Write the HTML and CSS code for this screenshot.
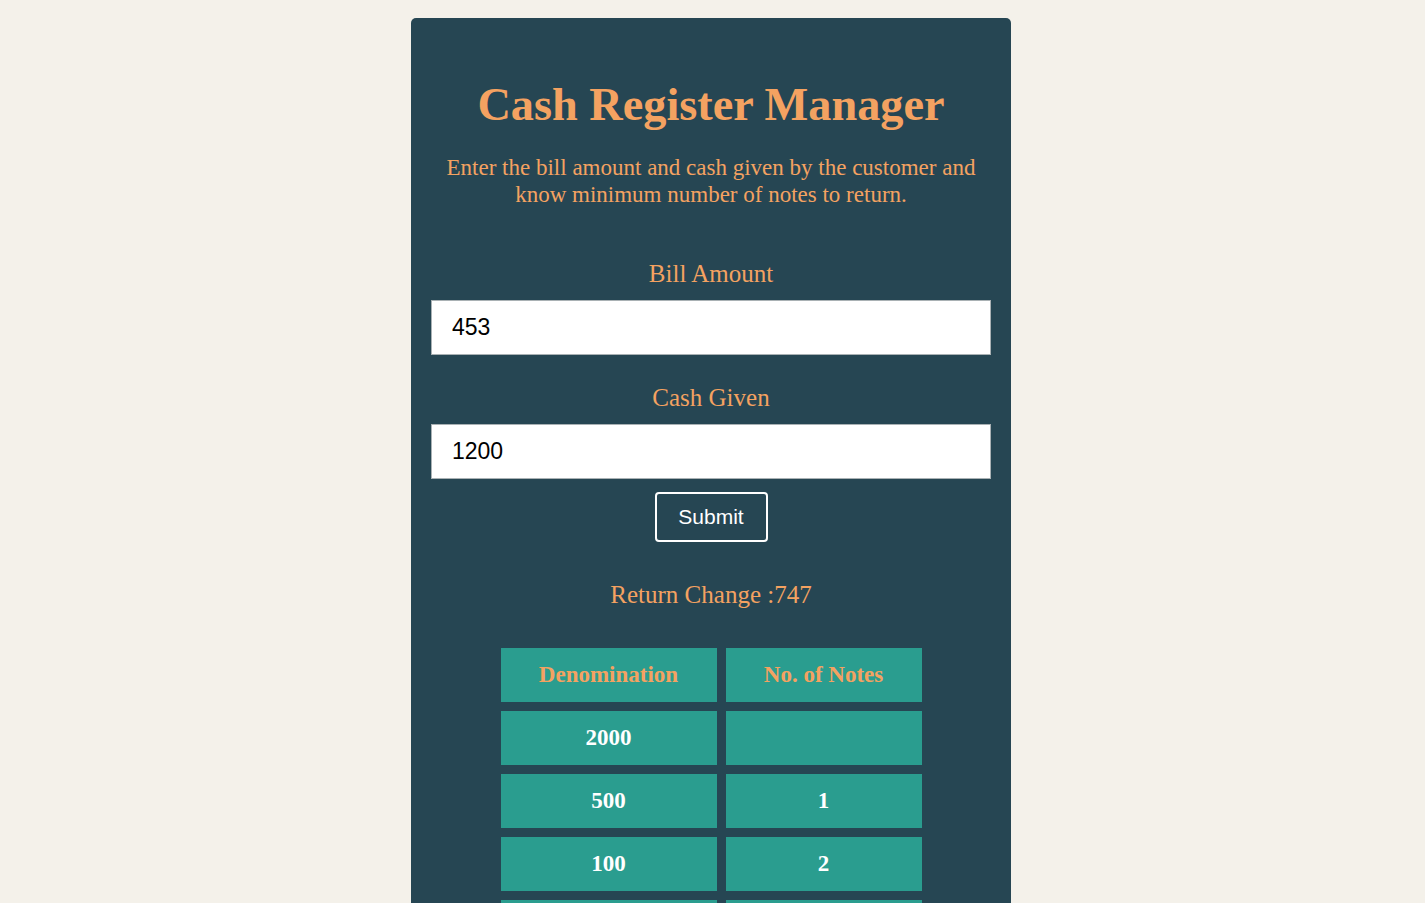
FILE: index.html
```html
<!DOCTYPE html>
<html lang="en">
<head>
<meta charset="utf-8">
<title>Cash Register Manager</title>
<link rel="stylesheet" href="styles.css">
</head>
<body>
<main class="card">
  <h1 class="title">Cash Register Manager</h1>
  <p class="subtitle">Enter the bill amount and cash given by the customer and know minimum number of notes to return.</p>
  <label class="label" for="bill">Bill Amount</label>
  <input class="field" id="bill" type="number" value="453">
  <label class="label label-second" for="cash">Cash Given</label>
  <input class="field" id="cash" type="number" value="1200">
  <div class="actions"><button class="submit" type="button">Submit</button></div>
  <p class="result">Return Change :747</p>
  <table class="notes">
    <thead>
      <tr><th class="col-denom">Denomination</th><th class="col-count">No. of Notes</th></tr>
    </thead>
    <tbody>
      <tr><td>2000</td><td></td></tr>
      <tr><td>500</td><td>1</td></tr>
      <tr><td>100</td><td>2</td></tr>
      <tr><td>50</td><td></td></tr>
      <tr><td>20</td><td>2</td></tr>
      <tr><td>10</td><td></td></tr>
      <tr><td>5</td><td>1</td></tr>
      <tr><td>1</td><td>2</td></tr>
    </tbody>
  </table>
</main>
</body>
</html>
```

FILE: styles.css
```css
* { box-sizing: border-box; }

body {
  margin: 0;
  padding-right: 3px;
  background: #f4f1ea;
  font-family: "Liberation Serif", "Times New Roman", serif;
}

.card {
  width: 600px;
  margin: 18px auto 0;
  padding: 20px 20px 40px;
  background: #264653;
  border-radius: 5px;
  display: flex;
  flex-direction: column;
  align-items: stretch;
  text-align: center;
  color: #f4a261;
}

.title {
  margin: 40px 0 0;
  font-size: 46.3px;
  line-height: 54px;
  font-weight: 700;
  color: #f4a261;
}

.subtitle {
  margin: 22px 0 0;
  font-size: 23px;
  line-height: 27px;
}

.label {
  display: block;
  margin-top: 52px;
  font-size: 25px;
  line-height: 28px;
}

.label-second { margin-top: 29px; }

.field {
  display: block;
  width: 100%;
  height: 55px;
  margin-top: 12px;
  padding: 0 20px;
  border: 1px solid #a9b1b4;
  background: #fff;
  font-family: "Liberation Sans", Arial, sans-serif;
  font-size: 23px;
  color: #000;
  outline: none;
  -moz-appearance: textfield;
}

.field::-webkit-outer-spin-button,
.field::-webkit-inner-spin-button { -webkit-appearance: none; margin: 0; }

.actions {
  display: flex;
  justify-content: center;
  margin-top: 13px;
}

.submit {
  width: 113px;
  height: 50px;
  background: transparent;
  border: 2px solid #fff;
  border-radius: 4px;
  color: #fff;
  font-family: "Liberation Sans", Arial, sans-serif;
  font-size: 21px;
  cursor: pointer;
}

.result {
  margin: 39px 0 0;
  font-size: 25px;
  line-height: 28px;
}

.notes {
  margin: 30px auto 0;
  border-spacing: 9px;
}

.notes th,
.notes td {
  height: 54px;
  padding: 0 10px;
  background: #2a9d8f;
  font-size: 23px;
  font-weight: 700;
  text-align: center;
  vertical-align: middle;
}

.notes th { color: #f4a261; }
.notes td { color: #fff; }

.col-denom { width: 216px; }
.col-count { width: 196px; }
```
